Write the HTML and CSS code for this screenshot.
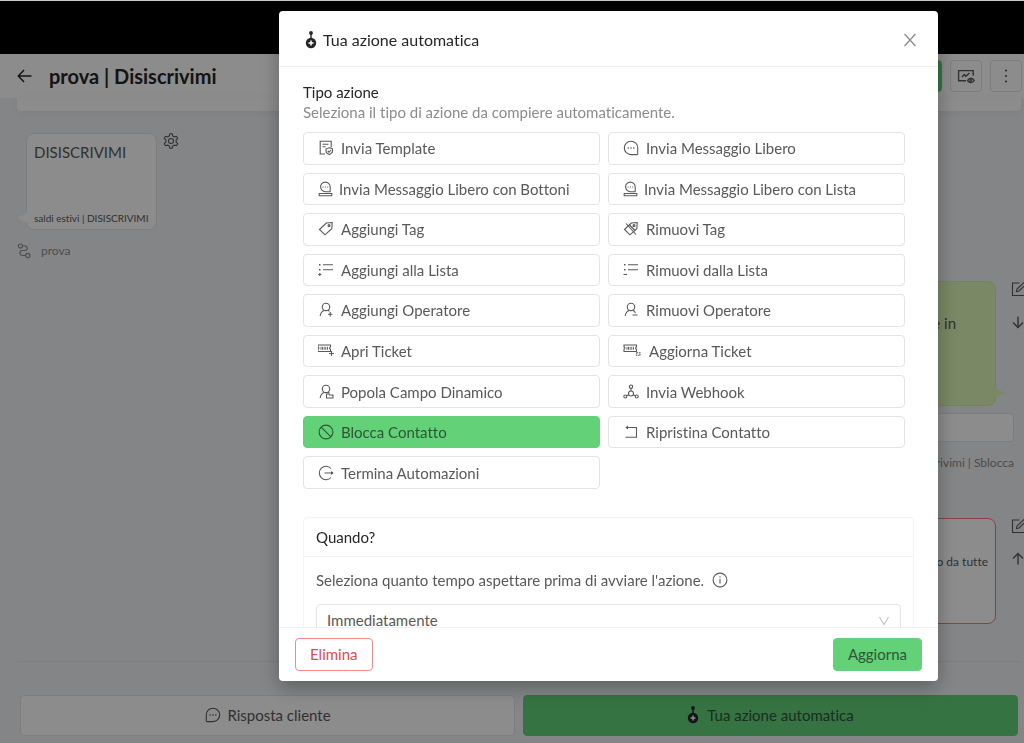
FILE: index.html
```html
<!DOCTYPE html>
<html lang="it">
<head>
    <meta charset="UTF-8">
    <meta name="viewport" content="width=device-width, initial-scale=1.0">
    <title>prova | Disiscrivimi</title>
    <link rel="stylesheet" href="styles.css">
</head>
<body>
    <!-- Shared icons -->
    <svg class="sprite" aria-hidden="true">
        <symbol id="i-chat" viewBox="0 0 16 16"><path d="M14.500 14.600H8A6.700 6.700 0 1 1 14.700 8v6.600"/><path d="M4.600 8h1.200M7.400 8h1.200M10.200 8h1.200" stroke-width="1.400"/></symbol>
        <symbol id="i-chat-base" viewBox="0 0 16 16"><path d="M12 10.700H7.300a4.800 4.800 0 1 1 4.900-4.800v4.300zM1.200 12.500h12.600v2.300H1.200z"/><path d="M4.600 6h1M6.900 6h1M9.200 6h1"/></symbol>
        <symbol id="i-tag" viewBox="0 0 16 16"><path d="M1.500 8.500 8.300 2l5.900-.5-.4 6.200L7 13.800z"/><circle cx="11" cy="4.600" r="1"/></symbol>
        <symbol id="i-list" viewBox="0 0 16 16"><path d="M5 2.800h10M5 7.800h10"/><path d="M1 2.800h1.500M1 7.800h1.500" stroke-width="1.600"/></symbol>
        <symbol id="i-user" viewBox="0 0 16 16"><circle cx="8" cy="4.900" r="3.700"/><path d="M2.200 14c.3-3 1.800-4.900 4-5.600M10 8.300l1.500 1"/></symbol>
        <symbol id="i-ticket" viewBox="0 0 18 16"><path d="M1 2h12.500v2c-1.200.3-1.200 2 0 2.300v2.200H1V6.300c1.200-.3 1.200-2 0-2.300z"/><path d="M4 3.800v3M5.500 3.800v3M7.200 3.800v3M8.800 3.800v3M10.500 3.800v3" stroke-width=".9"/></symbol>
        <symbol id="i-pin" viewBox="0 0 12 18"><circle cx="6" cy="2" r="1.900" fill="currentColor" stroke="none"/><path d="M6 2v6" stroke-width="1.400"/><circle cx="6" cy="12" r="5.200" fill="currentColor" stroke="none"/><path class="pin-plus" d="M6 9.500v5M3.500 12h5" stroke-width="1.500"/></symbol>
        <symbol id="i-edit" viewBox="0 0 16 16"><path d="M8.500 2H1.500v12.500H14V8"/><path d="M5.500 10.500 6 8l7.500-7 2 2L8 10z"/></symbol>
    </svg>

    <div class="page">
        <div class="topbar"></div>
        <header class="page-header">
            <a href="#" class="back" aria-label="Indietro"><svg class="icon" viewBox="0 0 16 16"><path d="M14.500 8H1.500M7 2 1.300 8 7 14" stroke-width="1.500"/></svg></a>
            <h1>prova | Disiscrivimi</h1>
            <div class="header-actions">
                <button class="btn-publish" aria-label="Salva"></button>
                <button class="btn-square" aria-label="Statistiche"><svg class="icon-lg" viewBox="0 0 18 16"><path d="M9 12.700H1.600V2.600h14.600v5.200M5 9l2.300-2.500 1.500 1.800L12.500 5M10.500 12.500c1.800-3 5.200-3 6.700 0-1.500 2.800-4.900 2.800-6.700 0z" stroke-width="1.400"/><circle cx="13.800" cy="12.500" r=".9"/></svg></button>
                <button class="btn-square" aria-label="Altro"><svg class="icon" viewBox="0 0 16 16"><g fill="currentColor" stroke="none"><circle cx="8" cy="2.500" r="1.100"/><circle cx="8" cy="8" r="1.100"/><circle cx="8" cy="13.500" r="1.100"/></g></svg></button>
            </div>
        </header>

        <main class="flow">
            <div class="strip"></div>
            <div class="row-left">
                <div class="bubble bubble-in">
                    <p>DISISCRIVIMI</p>
                    <small>saldi estivi | DISISCRIVIMI</small>
                </div>
                <svg class="icon" viewBox="0 0 16 16"><path d="m6.300 3 .6-2.200h2.200L9.700 3l1.600.9 2.200-.6 1.200 2L13.100 7v2l1.600 1.700-1.200 2-2.200-.6-1.600.9-.6 2.200H6.900L6.300 13l-1.600-.9-2.200.6-1.200-2L2.900 9V7L1.300 5.300l1.200-2 2.200.6z"/><circle cx="8" cy="8" r="2.500"/></svg>
            </div>
            <div class="caption">
                <svg class="icon" viewBox="0 0 16 16"><circle cx="3.500" cy="3" r="2"/><circle cx="10.800" cy="12.500" r="2.100"/><path d="M5.500 3H8c3 0 3 4.500 0 4.500H5.500c-3.500 0-3.500 5 0 5h3.200"/></svg>
                <span>prova</span>
            </div>

            <div class="row-right first">
                <div class="bubble bubble-out"><p>e in</p></div>
                <div class="side-tools">
                    <svg class="icon"><use href="#i-edit"/></svg>
                    <svg class="icon" viewBox="0 0 16 16"><path d="M7 2.500v11M2 8.500l5 5 5-5" stroke-width="1.400"/></svg>
                </div>
            </div>
            <div class="answer-box"></div>
            <div class="caption caption-right">rivimi | Sblocca</div>
            <div class="row-right second">
                <div class="bubble bubble-alert"><p>o da tutte</p></div>
                <div class="side-tools">
                    <svg class="icon"><use href="#i-edit"/></svg>
                    <svg class="icon" viewBox="0 0 16 16"><path d="M7 13.500v-11M2 7.500l5-5 5 5" stroke-width="1.400"/></svg>
                </div>
            </div>
        </main>

        <footer class="page-footer">
            <button class="btn-big"><svg class="icon-lg flip"><use href="#i-chat"/></svg>Risposta cliente</button>
            <button class="btn-big btn-green"><svg class="icon-pin"><use href="#i-pin"/></svg>Tua azione automatica</button>
        </footer>
    </div>

    <!-- Action dialog -->
    <div class="overlay">
        <div class="modal" role="dialog" aria-labelledby="modal-title">
            <div class="modal-header">
                <svg class="icon-pin"><use href="#i-pin"/></svg>
                <h2 id="modal-title">Tua azione automatica</h2>
                <button class="close" aria-label="Chiudi"><svg class="icon" viewBox="0 0 16 16"><path d="m2.500 2 11 12M13.500 2l-11 12" stroke-width="1.300"/></svg></button>
            </div>

            <div class="modal-body">
                <h3>Tipo azione</h3>
                <p class="hint">Seleziona il tipo di azione da compiere automaticamente.</p>

                <div class="actions">
                    <button class="action"><svg class="icon" viewBox="0 0 16 16"><path d="M7 14H2.200V1.300h11v6M4.500 4.300h6M4.500 6.800h3M11.300 7.800l3.200 1v2.500c0 1.700-1.400 2.500-3.200 3.100-1.800-.6-3.200-1.400-3.200-3.100V8.800zM9.800 11l1.200 1.200 2-2.200"/></svg>Invia Template</button>
                    <button class="action"><svg class="icon"><use href="#i-chat"/></svg>Invia Messaggio Libero</button>
                    <button class="action tight"><svg class="icon"><use href="#i-chat-base"/></svg>Invia Messaggio Libero con Bottoni</button>
                    <button class="action tight"><svg class="icon"><use href="#i-chat-base"/></svg>Invia Messaggio Libero con Lista</button>
                    <button class="action"><svg class="icon"><use href="#i-tag"/></svg>Aggiungi Tag</button>
                    <button class="action"><svg class="icon" viewBox="0 0 16 16"><use href="#i-tag" width="16" height="16"/><path d="m3 2.500 10 11M6 3.500l6 6"/></svg>Rimuovi Tag</button>
                    <button class="action"><svg class="icon" viewBox="0 0 16 16"><use href="#i-list" width="16" height="16"/><path d="M.3 12.500h3M1.800 11v3"/></svg>Aggiungi alla Lista</button>
                    <button class="action"><svg class="icon" viewBox="0 0 16 16"><use href="#i-list" width="16" height="16"/><path d="M.5 12.500H4"/></svg>Rimuovi dalla Lista</button>
                    <button class="action"><svg class="icon" viewBox="0 0 16 16"><use href="#i-user" width="16" height="16"/><path d="M10 12.200h4.500M12.200 10v4.500"/></svg>Aggiungi Operatore</button>
                    <button class="action"><svg class="icon" viewBox="0 0 16 16"><use href="#i-user" width="16" height="16"/><path d="m11 9 1.500 2M9.500 13h5"/></svg>Rimuovi Operatore</button>
                    <button class="action"><svg class="icon" viewBox="1 0 16 16"><use href="#i-ticket" width="18" height="16"/><path d="M12 10.500h5M14.500 8v5"/></svg>Apri Ticket</button>
                    <button class="action wide"><svg class="icon-lg" viewBox="0 0 18 16"><use href="#i-ticket" width="18" height="16"/><path d="M13.500 9.800h3.500v2.500h-3.500z" stroke-dasharray="1.500 .7"/></svg>Aggiorna Ticket</button>
                    <button class="action"><svg class="icon" viewBox="0 0 16 16"><use href="#i-user" width="16" height="16"/><path d="M8.500 10h2.300l.7 1h3.500v3H8.500z"/></svg>Popola Campo Dinamico</button>
                    <button class="action"><svg class="icon" viewBox="0 0 16 16"><circle cx="8" cy="2.700" r="1.700"/><circle cx="2.300" cy="12.500" r="1.500"/><circle cx="13.700" cy="12.500" r="1.500"/><circle cx="8" cy="9.500" r="2.500"/><path d="M8 4.400V7M5.800 10.700l-2 1M10.200 10.700l2 1"/></svg>Invia Webhook</button>
                    <button class="action selected"><svg class="icon" viewBox="0 0 16 16"><circle cx="8" cy="8" r="6.900"/><path d="m3.100 3.100 9.800 9.800"/></svg>Blocca Contatto</button>
                    <button class="action"><svg class="icon" viewBox="0 0 16 16"><path d="M3 3.500h10.500v9.700H2.500"/><path d="M5 1.500v4l-2.700-2z" fill="currentColor" stroke="none"/></svg>Ripristina Contatto</button>
                    <button class="action"><svg class="icon" viewBox="0 0 16 16"><path d="M13 3.500a6.700 6.700 0 1 0 0 9M6.500 8h8.500"/><path d="m13 6 2.700 2L13 10z" fill="currentColor" stroke="none"/></svg>Termina Automazioni</button>
                </div>

                <div class="card">
                    <div class="card-head">Quando?</div>
                    <div class="card-body">
                        <div class="field-label">
                            <label for="delay">Seleziona quanto tempo aspettare prima di avviare l'azione.</label>
                            <svg class="icon" viewBox="0 0 16 16"><circle cx="8" cy="8" r="6.900"/><path d="M8 6.800v4.700M8 4.300v1.200"/></svg>
                        </div>
                        <div class="select-wrap">
                            <select id="delay"><option>Immediatamente</option></select>
                            <svg class="chevron" viewBox="0 0 12 12"><path d="m1.500 2 4.500 7.500L10.500 2"/></svg>
                        </div>
                    </div>
                </div>
            </div>

            <div class="modal-footer">
                <button class="btn btn-danger">Elimina</button>
                <button class="btn btn-primary">Aggiorna</button>
            </div>
        </div>
    </div>
</body>
</html>
```
FILE: styles.css
```css
* {
    margin: 0;
    padding: 0;
    box-sizing: border-box;
}

body {
    font-family: 'Lato', 'Liberation Sans', sans-serif;
    font-size: 15px;
    line-height: 20px;
    font-variant-ligatures: none;
    color: #595959;
    background: #f0f2f5;
    overflow: hidden;
}

button,
select {
    font: inherit;
    font-variant-ligatures: none;
    color: inherit;
    background: #fff;
    border: 1px solid #e4e4e4;
    border-radius: 4px;
    cursor: pointer;
}

h1, h2, h3 {
    font-weight: 400;
    color: #262626;
}

svg {
    fill: none;
    stroke: currentColor;
    stroke-width: 1.1;
    flex-shrink: 0;
}

.sprite {
    position: absolute;
    width: 0;
    height: 0;
}

.icon {
    width: 16px;
    height: 16px;
}

.icon-lg {
    width: 18px;
    height: 16px;
}

.icon-pin {
    width: 12px;
    height: 18px;
    color: #262626;
}

.pin-plus {
    stroke: #fff;
}

/* Page */
.page {
    height: 100vh;
    display: flex;
    flex-direction: column;
}

.topbar {
    height: 54px;
    background: #000;
}

.page-header {
    height: 44px;
    padding: 0 2px 0 17px;
    display: flex;
    align-items: center;
    gap: 16px;
    background: #fff;
}

.back {
    display: flex;
    color: #262626;
}

.page-header h1 {
    font-size: 20px;
    line-height: 28px;
    font-weight: 700;
}

.header-actions {
    margin-left: auto;
    display: flex;
    gap: 8px;
}

.btn-square {
    width: 32px;
    height: 32px;
    display: flex;
    align-items: center;
    justify-content: center;
}

.btn-publish {
    width: 90px;
    height: 32px;
    background: #62d178;
    border-color: #62d178;
}

.flow {
    flex: 1;
    margin: 0 3px 0 17px;
    border-bottom: 1px solid #e3e5e8;
}

.strip {
    height: 13px;
    background: #fff;
    border-radius: 0 0 4px 4px;
    box-shadow: 0 2px 8px rgba(0, 0, 0, 0.05);
}

.row-left {
    display: flex;
    gap: 6px;
    margin: 22px 0 0 9px;
}

.bubble {
    position: relative;
    border: 1px solid #e4e4e4;
    border-radius: 8px;
    background: #fff;
}

.bubble-in {
    width: 131px;
    height: 97px;
    padding: 8px 7px 1px;
    display: flex;
    flex-direction: column;
    justify-content: space-between;
}

.bubble small {
    font-size: 10px;
    white-space: nowrap;
}

.bubble-in::before,
.bubble-out::after {
    content: '';
    position: absolute;
    border: 5px solid transparent;
}

.bubble-in::before {
    left: -10px;
    bottom: 6px;
    border-right: 10px solid #fff;
    border-left: 0;
}

.bubble-out::after {
    right: -10px;
    bottom: 7px;
    border-left: 10px solid #def7b9;
    border-right: 0;
}

.caption {
    margin-top: 11px;
    display: flex;
    align-items: center;
    gap: 8px;
    font-size: 12px;
    color: #8c8c8c;
}

.row-right {
    display: flex;
    justify-content: flex-end;
    gap: 15px;
    margin-right: -6px;
}

.first {
    margin-top: 20px;
}

.second {
    margin-top: 45px;
}

.bubble-out {
    width: 260px;
    height: 125px;
    padding: 31px 39px;
    text-align: right;
    background: #def7b9;
    border-color: #d3ecae;
}

.bubble-alert {
    width: 260px;
    height: 106px;
    padding: 33px 7px;
    font-size: 12px;
    text-align: right;
    border-color: #ff7a70;
}

.side-tools {
    display: flex;
    flex-direction: column;
    gap: 17px;
}

.answer-box {
    width: 300px;
    height: 29px;
    margin: 7px 7px 0 auto;
    background: #fff;
    border: 1px solid #e4e4e4;
    border-radius: 4px;
}

.caption-right {
    justify-content: flex-end;
    margin-right: 7px;
}

.page-footer {
    display: grid;
    grid-template-columns: 1fr 1fr;
    gap: 8px;
    padding: 33px 6px 7px 20px;
}

.btn-big {
    height: 41px;
    padding-bottom: 2px;
    display: flex;
    align-items: center;
    justify-content: center;
    gap: 5px;
}

.btn-green {
    gap: 8px;
    background: #62d178;
    border-color: #62d178;
    color: #2f5537;
}

.btn-green .pin-plus {
    stroke: #62d178;
}

.flip {
    transform: scaleX(-1);
}

/* Modal */
.overlay {
    position: fixed;
    inset: 0;
    padding: 10px 86px 62px 279px;
    background: rgba(0, 0, 0, 0.45);
    border-top: 1px solid #c8cccb;
}

.modal {
    height: 100%;
    display: flex;
    flex-direction: column;
    background: #fff;
    border-radius: 4px;
    box-shadow: 0 6px 20px rgba(0, 0, 0, 0.3);
    overflow: hidden;
}

.modal-header {
    height: 56px;
    padding: 2px 20px 0 26px;
    display: flex;
    align-items: center;
    gap: 6px;
    border-bottom: 1px solid #f0f0f0;
}

.modal-header h2 {
    font-size: 16px;
}

.close {
    margin-left: auto;
    display: flex;
    border: 0;
    color: #8c8c8c;
}

.modal-body {
    flex: 1;
    min-height: 0;
    padding: 15px 24px;
    overflow: hidden;
}

.modal-body h3 {
    font-size: 15px;
}

.hint {
    color: #8c8c8c;
}

.actions {
    height: 357px;
    margin: 10px 9px 0 0;
    display: grid;
    grid-template-columns: 1fr 1fr;
    grid-template-rows: repeat(9, 1fr);
    gap: 8px;
}

.action {
    padding: 0 14px;
    display: flex;
    align-items: center;
    gap: 7px;
}

.tight {
    gap: 5px;
}

.wide {
    gap: 8px;
}

.selected {
    background: #62d178;
    border-color: #62d178;
    color: #2f5537;
}

.card {
    margin-top: 28px;
    border: 1px solid #f3f3f3;
    border-radius: 4px;
}

.card-head {
    padding: 9px 12px;
    color: #262626;
    border-bottom: 1px solid #f3f3f3;
}

.card-body {
    padding: 13px 12px;
}

.field-label {
    display: flex;
    align-items: center;
    gap: 8px;
    margin-bottom: 14px;
}

.select-wrap {
    position: relative;
}

.select-wrap select {
    width: 100%;
    height: 32px;
    padding: 0 10px;
    appearance: none;
}

.chevron {
    position: absolute;
    top: 11px;
    right: 11px;
    width: 12px;
    height: 12px;
    color: #bfbfbf;
    pointer-events: none;
}

.modal-footer {
    height: 54px;
    padding: 0 16px;
    display: flex;
    align-items: center;
    justify-content: space-between;
    border-top: 1px solid #f0f0f0;
}

.btn {
    height: 33px;
    padding: 0 14px 1px;
}

.btn-danger {
    color: #e5484d;
    border-color: #f08a8a;
}

.btn-primary {
    background: #62d178;
    border-color: #62d178;
    color: #2f5537;
}
```
